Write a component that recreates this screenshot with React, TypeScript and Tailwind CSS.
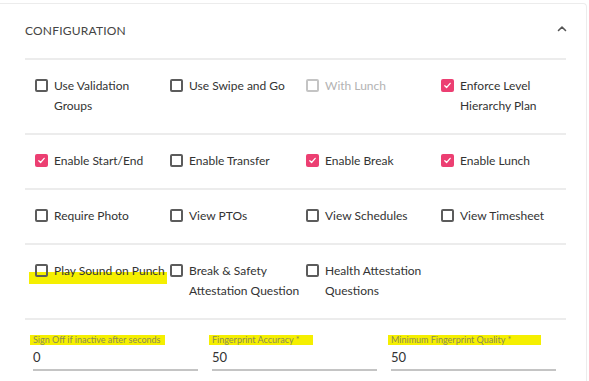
import React from "react";

type Opt = { label: string; checked?: boolean; disabled?: boolean; mark?: boolean };

const rows: Opt[][] = [
  [
    { label: "Use Validation Groups" },
    { label: "Use Swipe and Go" },
    { label: "With Lunch", disabled: true },
    { label: "Enforce Level Hierarchy Plan", checked: true },
  ],
  [
    { label: "Enable Start/End", checked: true },
    { label: "Enable Transfer" },
    { label: "Enable Break", checked: true },
    { label: "Enable Lunch", checked: true },
  ],
  [
    { label: "Require Photo" },
    { label: "View PTOs" },
    { label: "View Schedules" },
    { label: "View Timesheet" },
  ],
  [
    { label: "Play Sound on Punch", mark: true },
    { label: "Break & Safety Attestation Question" },
    { label: "Health Attestation Questions" },
  ],
];

const fields = [
  { label: "Sign Off if inactive after seconds", value: "0", hl: "w-[135px]" },
  { label: "Fingerprint Accuracy *", value: "50", hl: "w-[104px]" },
  { label: "Minimum Fingerprint Quality *", value: "50", hl: "w-[153px]" },
];

function Check({ opt }: { opt: Opt }) {
  return (
    <div className="relative flex items-start gap-[6px]">
      {opt.mark && (
        <span className="absolute left-[-6px] top-[11px] h-[12px] w-[138px] bg-[#f5ef00]" />
      )}
      <span
        className={
          "relative mt-[3px] flex h-[13px] w-[13px] shrink-0 items-center justify-center rounded-[2px] " +
          (opt.checked
            ? "bg-[#ec3f72]"
            : opt.disabled
            ? "border-2 border-[#c4c4c4]"
            : "border-2 border-[#5c5c5c]")
        }
      >
        {opt.checked && (
          <svg width="9" height="9" viewBox="0 0 10 10" fill="none" stroke="white" strokeWidth="1.4" strokeLinecap="round" strokeLinejoin="round">
            <path d="M2 5.2l2 2 4-4.6" />
          </svg>
        )}
      </span>
      <span
        className={
          "relative leading-[20px] " +
          (opt.mark ? "whitespace-nowrap " : "") +
          (opt.disabled ? "text-[#b3b3b3]" : "text-[#333]")
        }
      >
        {opt.label}
      </span>
    </div>
  );
}

export default function App() {
  return (
    <div className="h-[381px] w-[589px] overflow-hidden bg-white pt-[3px] text-[12px]" style={{ fontFamily: "Lato, 'Open Sans', sans-serif" }}>
      <div className="h-[400px] w-[587px] rounded-tr-[4px] border-t border-r border-[#ececec] pl-[25px] pr-[20px]">
        <div className="flex h-[54px] items-center justify-between">
          <span className="text-[12px] uppercase tracking-[0.2px] text-[#444]">Configuration</span>
          <svg width="10" height="7" viewBox="0 0 10 7" fill="none" stroke="#555" strokeWidth="1.6" strokeLinecap="round" strokeLinejoin="round" className="mr-[-1px] mb-[6px]">
            <path d="M1.5 5.5L5 2l3.5 3.5" />
          </svg>
        </div>
        {rows.map((row, i) => (
          <div key={i} className="border-t-2 border-[#ececec] pl-[10px] pt-[16px] pb-[17px]">
            <div className="grid grid-cols-[135px_136px_135px_125px]">
              {row.map((o) => (
                <Check key={o.label} opt={o} />
              ))}
            </div>
          </div>
        ))}
        <div className="border-t-2 border-[#ececec] pl-[8px] pt-[14px]">
          <div className="grid grid-cols-[165px_165px_165px] gap-x-[14px]">
            {fields.map((f) => (
              <div key={f.label} className="flex flex-col">
                <span className="relative h-[12px] text-[9px] leading-[12px] text-[#8a8a5a]">
                  <span className={"absolute left-[-3px] top-[1px] h-[10px] bg-[#f5ef00] " + f.hl} />
                  <span className="relative">{f.label}</span>
                </span>
                <span className="mt-[2px] pb-[3px] text-[13px] leading-[18px] text-[#333] border-b-2 border-[#c4c4c4]">{f.value}</span>
              </div>
            ))}
          </div>
        </div>
      </div>
    </div>
  );
}
